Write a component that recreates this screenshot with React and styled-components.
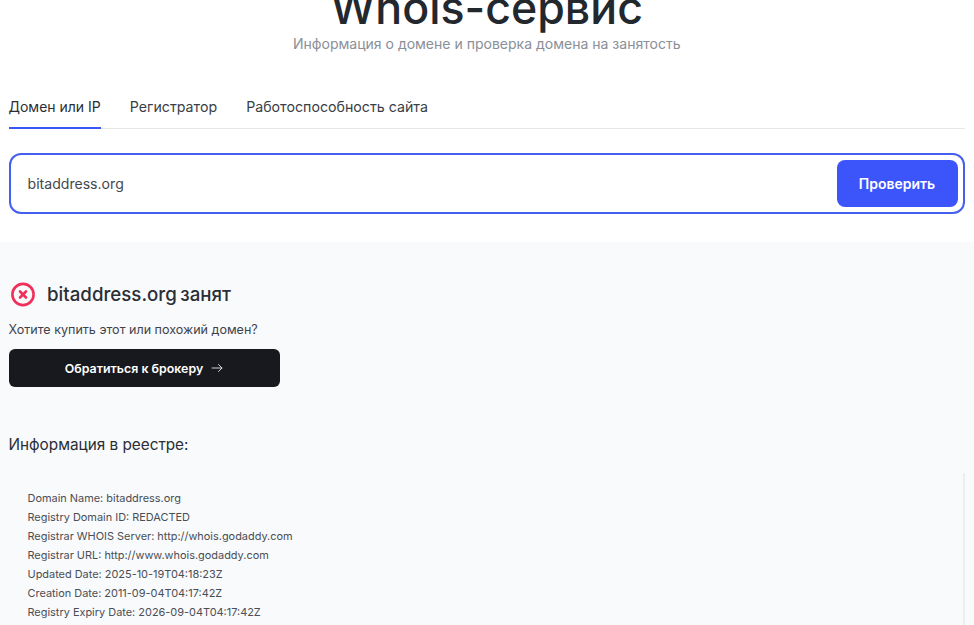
import React from "react";
import styled, { createGlobalStyle } from "styled-components";

const GlobalStyle = createGlobalStyle`
  html, body {
    margin: 0;
    padding: 0;
    height: 625px;
    overflow: hidden;
    background: #ffffff;
    font-family: Inter, "Noto Sans", sans-serif;
  }
`;

const Page = styled.div`
  width: 974px;
  height: 625px;
  overflow: hidden;
`;

const Top = styled.div`
  display: flow-root;
  height: 242px;
  padding: 0 9px 0 8.5px;
  box-sizing: border-box;
`;

const Title = styled.h1`
  margin: -21px 0 0;
  height: 58px;
  line-height: 58px;
  font-size: 44.7px;
  font-weight: 500;
  color: #23272e;
  text-align: center;
`;

const Subtitle = styled.div`
  margin-top: -3px;
  font-size: 14.03px;
  line-height: 20px;
  color: #8a8f98;
  text-align: center;
`;

const Tabs = styled.div`
  display: flex;
  gap: 29px;
  margin-top: 34px;
  height: 41px;
  box-sizing: border-box;
  border-bottom: 1px solid #e4e6ea;
`;

const Tab = styled.div`
  height: 41px;
  box-sizing: border-box;
  padding-top: 9px;
  font-size: ${(p) => (p.$active ? "14px" : "14.2px")};
  line-height: 20px;
  color: ${(p) => (p.$active ? "#2a2e35" : "#3a3e45")};
  border-bottom: ${(p) => (p.$active ? "2px solid #3a56f5" : "none")};
`;

const SearchBox = styled.div`
  display: flex;
  align-items: center;
  justify-content: space-between;
  height: 61px;
  margin-top: 24px;
  padding: 0 5px 0 17px;
  box-sizing: border-box;
  width: 956px;
  border: 2px solid #4560ee;
  border-radius: 12px;
  background: #ffffff;
`;

const Query = styled.div`
  font-size: 14.1px;
  color: #43474e;
`;

const CheckButton = styled.button`
  width: 121px;
  height: 47px;
  border: none;
  border-radius: 8px;
  background: #3c55fb;
  color: #ffffff;
  font-family: inherit;
  font-size: 14px;
  font-weight: 600;
`;

const Result = styled.div`
  height: 383px;
  background: #f9fafc;
  padding: 39px 9px 0 8.5px;
  box-sizing: border-box;
  position: relative;
`;

const StatusRow = styled.div`
  display: flex;
  align-items: center;
  gap: 11.5px;
  height: 27px;
`;

const StatusText = styled.div`
  font-size: 18.7px;
  font-weight: 500;
  word-spacing: -1.5px;
  color: #2a2e35;
`;

const Question = styled.div`
  margin-top: 12px;
  font-size: 12.55px;
  line-height: 20px;
  color: #3f434a;
`;

const BrokerButton = styled.button`
  display: flex;
  align-items: center;
  justify-content: center;
  gap: 8px;
  width: 271px;
  height: 38px;
  margin-top: 9px;
  border: none;
  border-radius: 6px;
  background: #18191e;
  color: #ffffff;
  font-family: inherit;
  font-size: 12.4px;
  font-weight: 600;
`;

const RegistryTitle = styled.div`
  margin-top: 47px;
  font-size: 15.3px;
  font-weight: 400;
  line-height: 22px;
  color: #2a2e35;
`;

const WhoisList = styled.div`
  margin-top: 33px;
  padding-left: 19px;
`;

const WhoisLine = styled.div`
  font-size: 10.93px;
  line-height: 19px;
  color: #4a4e55;
`;

const ScrollEdge = styled.div`
  position: absolute;
  right: 9px;
  top: 231px;
  bottom: 0;
  width: 2px;
  background: #eceef1;
`;

const lines = [
  "Domain Name: bitaddress.org",
  "Registry Domain ID: REDACTED",
  "Registrar WHOIS Server: http://whois.godaddy.com",
  "Registrar URL: http://www.whois.godaddy.com",
  "Updated Date: 2025-10-19T04:18:23Z",
  "Creation Date: 2011-09-04T04:17:42Z",
  "Registry Expiry Date: 2026-09-04T04:17:42Z",
];

const TakenIcon = () => (
  <svg width="27" height="27" viewBox="0 0 27 27" fill="none" stroke="#f0305a" strokeWidth="2.6" strokeLinecap="round">
    <circle cx="14" cy="13.5" r="10.6" />
    <path d="M11 10.5l6 6M17 10.5l-6 6" />
  </svg>
);

const ArrowIcon = () => (
  <svg width="12" height="12" viewBox="0 0 12 12" fill="none" stroke="#d6d6d8" strokeWidth="1" strokeLinecap="round" strokeLinejoin="round">
    <path d="M1 6h10M7.5 2.5L11 6l-3.5 3.5" />
  </svg>
);

export default function App() {
  return (
    <Page>
      <GlobalStyle />
      <Top>
        <Title>Whois-сервис</Title>
        <Subtitle>Информация о домене и проверка домена на занятость</Subtitle>
        <Tabs>
          <Tab $active>Домен или IP</Tab>
          <Tab>Регистратор</Tab>
          <Tab>Работоспособность сайта</Tab>
        </Tabs>
        <SearchBox>
          <Query>bitaddress.org</Query>
          <CheckButton>Проверить</CheckButton>
        </SearchBox>
      </Top>
      <Result>
        <StatusRow>
          <TakenIcon />
          <StatusText>bitaddress.org занят</StatusText>
        </StatusRow>
        <Question>Хотите купить этот или похожий домен?</Question>
        <BrokerButton>
          Обратиться к брокеру
          <ArrowIcon />
        </BrokerButton>
        <RegistryTitle>Информация в реестре:</RegistryTitle>
        <WhoisList>
          {lines.map((line) => (
            <WhoisLine key={line}>{line}</WhoisLine>
          ))}
        </WhoisList>
        <ScrollEdge />
      </Result>
    </Page>
  );
}
